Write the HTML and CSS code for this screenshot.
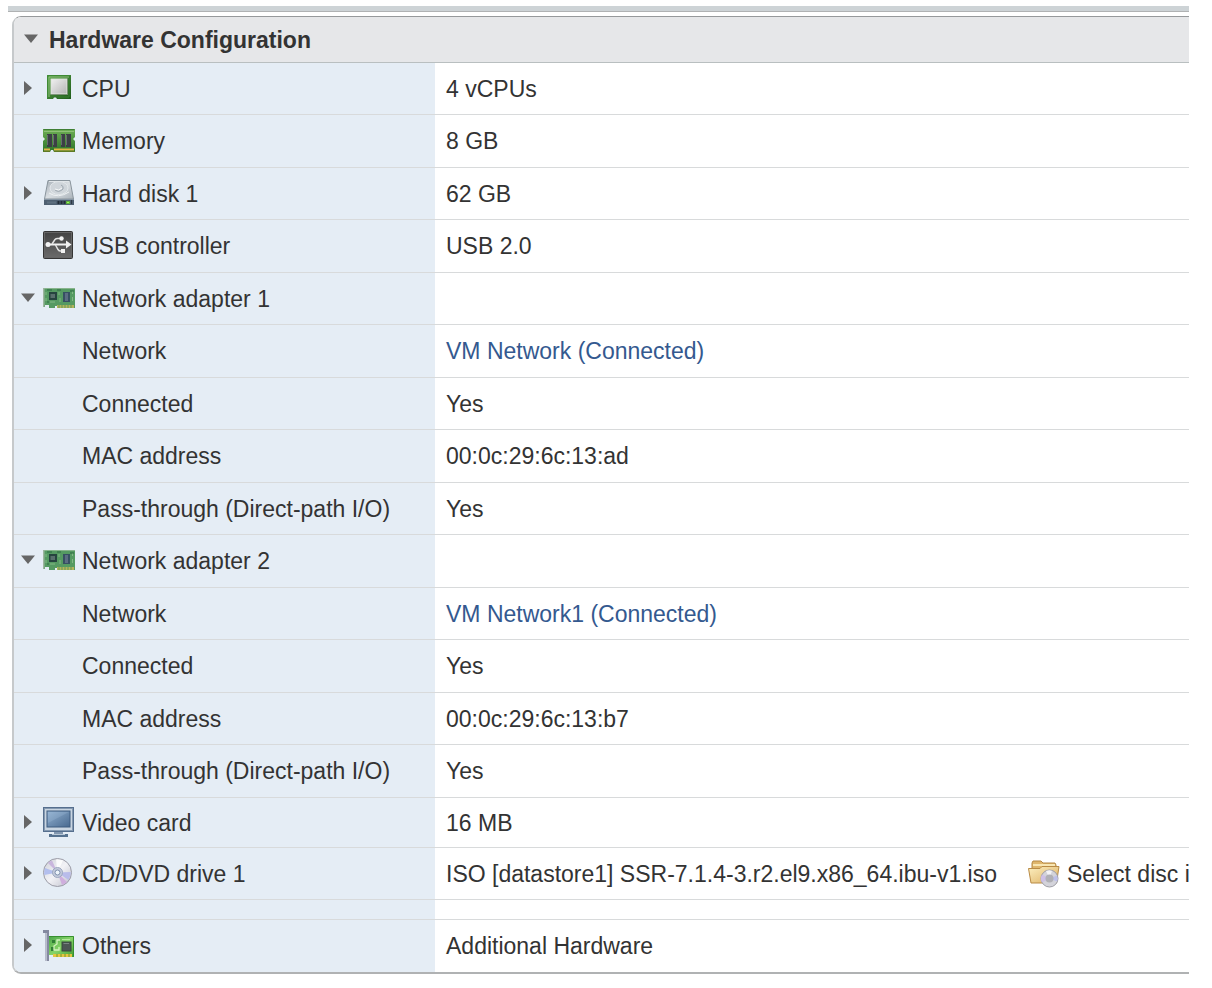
FILE: index.html
```html
<!DOCTYPE html>
<html lang="en">
<head>
    <meta charset="UTF-8">
    <meta name="viewport" content="width=device-width, initial-scale=1.0">
    <title>Hardware Configuration</title>
<link rel="stylesheet" href="styles.css">
</head>
<body>

<!-- gradients and the icon that is used twice -->
<svg class="defs" aria-hidden="true">
  <defs>
    <linearGradient id="gGreen" x1="0" y1="0" x2="1" y2="1"><stop offset="0" stop-color="#58a046"/><stop offset="1" stop-color="#1f5c1b"/></linearGradient>
    <linearGradient id="gMem" x1="0" y1="0" x2="0" y2="1"><stop offset="0" stop-color="#6fae55"/><stop offset="1" stop-color="#2c7427"/></linearGradient>
    <linearGradient id="gCard" x1="0" y1="0" x2="1" y2="1"><stop offset="0" stop-color="#4aa548"/><stop offset=".5" stop-color="#86d468"/><stop offset="1" stop-color="#409a2f"/></linearGradient>
    <linearGradient id="gChip" x1="0" y1="0" x2="1" y2="1"><stop offset="0" stop-color="#f1f1f1"/><stop offset="1" stop-color="#b4b4b4"/></linearGradient>
    <linearGradient id="gDisk" x1="0" y1="0" x2="1" y2="1"><stop offset="0" stop-color="#a5aeb6"/><stop offset=".5" stop-color="#d9dee2"/><stop offset="1" stop-color="#a9b2b9"/></linearGradient>
    <linearGradient id="gUsb" x1="0" y1="0" x2="0" y2="1"><stop offset="0" stop-color="#424242"/><stop offset="1" stop-color="#6b6b6b"/></linearGradient>
    <linearGradient id="gScreen" x1="0" y1="0" x2="1" y2="1"><stop offset="0" stop-color="#93b2d2"/><stop offset="1" stop-color="#48698f"/></linearGradient>
    <linearGradient id="gDisc" x1="0" y1="0" x2="1" y2="1"><stop offset="0" stop-color="#cfd0d8"/><stop offset=".5" stop-color="#f2f2f6"/><stop offset="1" stop-color="#bcbdc8"/></linearGradient>
    <linearGradient id="gFolder" x1="0" y1="0" x2="1" y2="1"><stop offset="0" stop-color="#fdf0c2"/><stop offset="1" stop-color="#dcae5e"/></linearGradient>
    <symbol id="nic" viewBox="0 0 32 32">
      <path d="M0 5H32V25H14V23H12V25H6V22H2V24H0Z" fill="#559a62"/>
      <path d="M0 5H32V6H0Z" fill="#88b48d"/>
      <path d="M0 5H1.500V24H0Z" fill="#9db59f"/>
      <path d="M14 22H31V25H14Z" fill="#b2b45c"/>
      <path d="M16 22V25M19 22V25M22 22V25M25 22V25M28 22V25" stroke="#609a57"/>
      <path d="M6 9H14V17H6Z" fill="#26443f"/>
      <path d="M7.500 11H12V15H7.500Z" fill="#586f6c"/>
      <path d="M20 9H27V19H20Z" fill="#365062"/>
      <path d="M22 10H25V18H22Z" fill="#5b6c82"/>
      <path d="M3 9V12M3 15V18M16 9V12M17 15V19M29.500 8V11M29.500 14V18M7 19H12" stroke="#83b985"/>
      <path d="M4 7H9M14 7H18M27 8H31M5 18V20" stroke="#2c6b40"/>
    </symbol>
    <symbol id="right" viewBox="0 0 14 14"><path d="M3 0L11 7L3 14Z" fill="#666"/></symbol>
    <symbol id="down" viewBox="0 0 14 14"><path d="M0 2.500H14L7 11Z" fill="#666"/></symbol>
  </defs>
</svg>

<div class="topbar"></div>

<div class="panel">
  <h3 class="panel-title">
    <button type="button" class="toggle" aria-label="Collapse hardware configuration" aria-expanded="true"><svg class="arrow"><use href="#down"/></svg></button>
    Hardware Configuration
  </h3>

  <table class="hardware">
    <tbody class="devices">
    <tr>
      <th scope="row"><div class="device">
        <button type="button" class="toggle" aria-label="CPU details" aria-expanded="false"><svg class="arrow"><use href="#right"/></svg></button>
        <svg class="icon" viewBox="0 0 32 32">
          <path d="M4 2H28V26H14L13 24.500H11L10 26H4Z" fill="url(#gGreen)"/>
          <path d="M4.500 25V2.500H27.500" fill="none" stroke="#3f8a35"/>
          <path d="M6 24V4H26" fill="none" stroke="#8cc07a"/>
          <path d="M26 5V24H15" fill="none" stroke="#3b8032"/>
          <rect x="8" y="6" width="16" height="15" fill="url(#gChip)" stroke="#dfe6dc"/>
          <path d="M8 21.500H24.500V6" fill="none" stroke="#7f947a"/>
        </svg>
        CPU</div></th>
      <td>4 vCPUs</td>
    </tr>
    <tr>
      <th scope="row"><div class="device">
        <span class="toggle"></span>
        <svg class="icon" viewBox="0 0 32 32">
          <path d="M0 4H32V12L30 14L32 16V27H11L10 25H8L7 27H0V16L2 14L0 12Z" fill="url(#gMem)"/>
          <path d="M0.500 4.500H31.500" stroke="#3f7e34"/>
          <path d="M1 6.500H31" stroke="#8fc077"/>
          <path d="M4 9H9V22H4ZM10 9H14V22H10ZM18 9H22V22H18ZM23 9H28V22H23Z" fill="#3c4045"/>
          <path d="M4.500 10V20M10.500 10V20M18.500 10V20M23.500 10V20" stroke="#686c6f"/>
          <path d="M1 24.500H7M11 24.500H31" stroke="#e0b445" stroke-width="2"/>
          <path d="M0 26.500H7M11 26.500H32" stroke="#5f7a24"/>
        </svg>
        Memory</div></th>
      <td>8 GB</td>
    </tr>
    <tr>
      <th scope="row"><div class="device">
        <button type="button" class="toggle" aria-label="Hard disk 1 details" aria-expanded="false"><svg class="arrow"><use href="#right"/></svg></button>
        <svg class="icon" viewBox="0 0 32 32">
          <path d="M5 2.500H27L30.500 21H1.500Z" fill="url(#gDisk)" stroke="#8a959d"/>
          <path d="M6 3.500H26" stroke="#e1e6e9"/>
          <ellipse cx="16" cy="10" rx="9" ry="6.500" fill="#cfd5da" stroke="#e3e8eb"/>
          <path d="M6 15Q15 21 26 14" fill="none" stroke="#eff2f4"/>
          <path d="M12 12Q16 15 20 11Q21 8 18 7" fill="none" stroke="#9ca6ae"/>
          <path d="M12 11Q16 13.500 19 10" fill="none" stroke="#f6f8f9"/>
          <path d="M1 21H31V27H1Z" fill="#4f6071"/>
          <path d="M1 21.500H31" stroke="#8796a4"/>
          <path d="M4 24.500H13" stroke="#5f7080" stroke-width="2"/>
          <path d="M15.500 23V26M18.500 23V26M21.500 23V26" stroke="#222d38" stroke-width="2"/>
          <rect x="23" y="23" width="4" height="3" fill="#5cae3a"/>
          <rect x="24" y="24" width="2" height="1" fill="#9cf25c"/>
          <path d="M28.500 22V26" stroke="#2d3945"/>
        </svg>
        Hard disk 1</div></th>
      <td>62 GB</td>
    </tr>
    <tr>
      <th scope="row"><div class="device">
        <span class="toggle"></span>
        <svg class="icon" viewBox="0 0 32 32">
          <rect x="0.500" y="1.500" width="29" height="27" rx="1" fill="url(#gUsb)" stroke="#353535"/>
          <rect x="1.500" y="2.500" width="27" height="25" fill="none" stroke="#656565"/>
          <path d="M4 14.500H24" stroke="#f2f2f2" stroke-width="2"/>
          <path d="M9 14L12 9.500Q13 8.500 14.500 8.500H18M12.500 15L15 19.500Q16 21 17.500 21H20" fill="none" stroke="#e2e2e2" stroke-width="1.500"/>
          <circle cx="5" cy="14.500" r="2.500" fill="#f2f2f2"/>
          <path d="M23 10.500L28.500 14.500L23 18.500Z" fill="#f2f2f2"/>
          <circle cx="18.500" cy="8.500" r="2.200" fill="#f2f2f2"/>
          <rect x="18" y="19" width="4" height="4" fill="#f2f2f2"/>
        </svg>
        USB controller</div></th>
      <td>USB 2.0</td>
    </tr>
    <tr>
      <th scope="row"><div class="device">
        <button type="button" class="toggle" aria-label="Network adapter 1 details" aria-expanded="true"><svg class="arrow"><use href="#down"/></svg></button>
        <svg class="icon"><use href="#nic"/></svg>
        Network adapter 1</div></th>
      <td></td>
    </tr>
    <tr>
      <th scope="row" class="sub">Network</th>
      <td><a href="#">VM Network (Connected)</a></td>
    </tr>
    <tr>
      <th scope="row" class="sub">Connected</th>
      <td>Yes</td>
    </tr>
    <tr>
      <th scope="row" class="sub">MAC address</th>
      <td>00:0c:29:6c:13:ad</td>
    </tr>
    <tr>
      <th scope="row" class="sub">Pass-through (Direct-path I/O)</th>
      <td>Yes</td>
    </tr>
    <tr>
      <th scope="row"><div class="device">
        <button type="button" class="toggle" aria-label="Network adapter 2 details" aria-expanded="true"><svg class="arrow"><use href="#down"/></svg></button>
        <svg class="icon"><use href="#nic"/></svg>
        Network adapter 2</div></th>
      <td></td>
    </tr>
    <tr>
      <th scope="row" class="sub">Network</th>
      <td><a href="#">VM Network1 (Connected)</a></td>
    </tr>
    <tr>
      <th scope="row" class="sub">Connected</th>
      <td>Yes</td>
    </tr>
    <tr>
      <th scope="row" class="sub">MAC address</th>
      <td>00:0c:29:6c:13:b7</td>
    </tr>
    <tr>
      <th scope="row" class="sub">Pass-through (Direct-path I/O)</th>
      <td>Yes</td>
    </tr>
    </tbody>

    <tbody class="media">
    <tr>
      <th scope="row"><div class="device">
        <button type="button" class="toggle" aria-label="Video card details" aria-expanded="false"><svg class="arrow"><use href="#right"/></svg></button>
        <svg class="icon" viewBox="0 0 32 32">
          <rect x="0.500" y="0.500" width="30" height="24" fill="#c9d5e1" stroke="#566f8e"/>
          <rect x="1.500" y="1.500" width="28" height="22" fill="none" stroke="#8499b1"/>
          <rect x="4" y="4" width="23" height="16" fill="url(#gScreen)" stroke="#3f5d80"/>
          <path d="M5 5H26L5 16Z" fill="#a9c4de" opacity=".25"/>
          <path d="M11 25H20V27H11Z" fill="#8297af"/>
          <path d="M6 27H25V30H6Z" fill="#55718f"/>
          <path d="M9 27.500H22" stroke="#b8c7d6"/>
        </svg>
        Video card</div></th>
      <td>16 MB</td>
    </tr>
    <tr>
      <th scope="row"><div class="device">
        <button type="button" class="toggle" aria-label="CD/DVD drive 1 details" aria-expanded="false"><svg class="arrow"><use href="#right"/></svg></button>
        <svg class="icon" viewBox="0 0 32 32">
          <circle cx="14.500" cy="14.500" r="14" fill="url(#gDisc)" stroke="#9a9ba6"/>
          <path d="M14.500 14.500L5 5A13.500 13.500 0 0 1 9 2.500Z" fill="#c9b6dd"/>
          <path d="M14.500 14.500L1.200 17A13.500 13.500 0 0 1 2 10Z" fill="#b3bfee"/>
          <path d="M14.500 14.500L24 24A13.500 13.500 0 0 1 19 27Z" fill="#cfaedd"/>
          <path d="M14.500 14.500L27.800 14A13.500 13.500 0 0 1 25.500 22Z" fill="#b9bcea"/>
          <path d="M14.500 14.500L13 1.500A13 13 0 0 1 20 2.500Z" fill="#fff" opacity=".8"/>
          <circle cx="14.500" cy="14.500" r="5" fill="#c4cadb" stroke="#9ba7bf"/>
          <circle cx="14.500" cy="14.500" r="2.500" fill="#eef4fa" stroke="#7f91ae"/>
        </svg>
        CD/DVD drive 1</div></th>
      <td><div class="disc">
        <span>ISO [datastore1] SSR-7.1.4-3.r2.el9.x86_64.ibu-v1.iso</span>
        <button type="button" class="select-disc">
          <svg class="icon" viewBox="0 0 32 32">
            <path d="M4 11V5L5 3H13L15 5H27L28 7V12H4Z" fill="#dfb66d" stroke="#b58743"/>
            <path d="M5 7H27" stroke="#f8e6b3" stroke-width="2"/>
            <path d="M0.500 10.500H12L14 8.500H31L28.500 25H3Z" fill="url(#gFolder)" stroke="#b98b46"/>
            <circle cx="21.500" cy="20.500" r="8.500" fill="#d3d3da" stroke="#9d9da5"/>
            <path d="M21.500 20.500L14 16.500A8 8 0 0 0 14 24.500Z" fill="#cdc0e6"/>
            <path d="M21.500 20.500L29 17.500A8 8 0 0 1 29 23.500Z" fill="#bdc0ea"/>
            <path d="M21.500 20.500L18 13A8 8 0 0 1 24 12.800Z" fill="#f3f3f6"/>
            <circle cx="21.500" cy="20.500" r="4" fill="#b0b0b6"/>
          </svg>
          Select disc i
        </button>
      </div></td>
    </tr>
    <tr class="spacer">
      <td class="blank"></td>
      <td></td>
    </tr>
    <tr>
      <th scope="row"><div class="device">
        <button type="button" class="toggle" aria-label="Other hardware" aria-expanded="false"><svg class="arrow"><use href="#right"/></svg></button>
        <svg class="icon" viewBox="0 0 32 32">
          <path d="M6 6H31V27H10V25H6Z" fill="url(#gCard)"/>
          <path d="M6 6.500H30.500V26.500" fill="none" stroke="#37902f"/>
          <path d="M10 24H29V27H10Z" fill="#e5c540"/>
          <path d="M14 24V27M18 24V27M22 24V27M26 24V27" stroke="#6a9a2f"/>
          <rect x="19" y="12" width="9" height="9" fill="#4c5654" stroke="#354b38"/>
          <path d="M20.500 13.500H26" stroke="#7b8582"/>
          <path d="M9 10H12V13H9ZM8 17H11V21H8Z" fill="#317f36"/>
          <path d="M17 10H14V14L11 16V20H16V17" fill="none" stroke="#d2f3bd" stroke-width="1.300"/>
          <path d="M19 9.500H27" stroke="#b4e79b"/>
          <path d="M0 0H6V31H2.500V3H0Z" fill="#8489a0"/>
          <path d="M3.500 3V31" stroke="#b9bdcb"/>
        </svg>
        Others</div></th>
      <td>Additional Hardware</td>
    </tr>
    </tbody>
  </table>
</div>

</body>
</html>
```
FILE: styles.css
```css
*{box-sizing: border-box;}
body{
    margin: 0;
    padding: 6px 23px 0 8px;
    background-color: white;
    color: #333;
    font-family: "Liberation Sans", Arial, sans-serif;
    font-size: 23px;
    line-height: 26px;
}
.defs{
    display: block;
    width: 0;
    height: 0;
}
.topbar{
    height: 6px;
    background-color: #cdd3d6;
    border-bottom: 1px solid #b0b2b3;
}
.panel{
    margin: 4px 0 0 4px;
    border-top: 1px solid #96999b;
    border-left: 2px solid #c6c9cb;
    border-bottom: 2px solid #b0b2b3;
    border-radius: 9px 0 0 9px;
    overflow: hidden;
}
.panel-title{
    display: flex;
    align-items: center;
    height: 46px;
    margin: 0;
    padding-left: 3px;
    gap: 3px;
    background-color: #e6e7e9;
    border-bottom: 1px solid #b9bfc0;
    font-size: 23px;
    font-weight: bold;
}
.hardware{
    width: 100%;
    table-layout: fixed;
    border-collapse: separate;
    border-spacing: 0;
}
th,td{
    height: 52px;
    padding: 0;
    border-bottom: 1px solid #d8dadb;
    text-align: left;
    font-weight: normal;
    white-space: nowrap;
}
th,.blank{
    width: 421px;
    background-color: #e5edf5;
}
td{
    padding-left: 11px;
}
.devices tr:nth-child(even) > *{
    height: 53px;
}
.media tr:first-child > *{
    height: 50px;
}
.spacer > *{
    height: 20px;
}
.media tr:last-child > *{
    border-bottom: 0;
}
.sub{
    padding-left: 68px;
}
.device{
    display: flex;
    align-items: center;
}
.toggle{
    display: flex;
    flex: none;
    align-items: flex-start;
    justify-content: center;
    width: 29px;
    height: 26px;
    padding: 5px 1px 0 0;
    border: 0;
    background: none;
}
.arrow{
    width: 14px;
    height: 14px;
}
.icon{
    flex: none;
    width: 32px;
    height: 32px;
    margin-right: 7px;
}
a{
    color: #34598f;
    text-decoration: none;
}
.disc{
    display: flex;
    align-items: center;
    gap: 31px;
    overflow: hidden;
}
.select-disc{
    display: flex;
    align-items: center;
    padding: 0;
    border: 0;
    background: none;
    color: inherit;
    font: inherit;
    white-space: nowrap;
}
```
